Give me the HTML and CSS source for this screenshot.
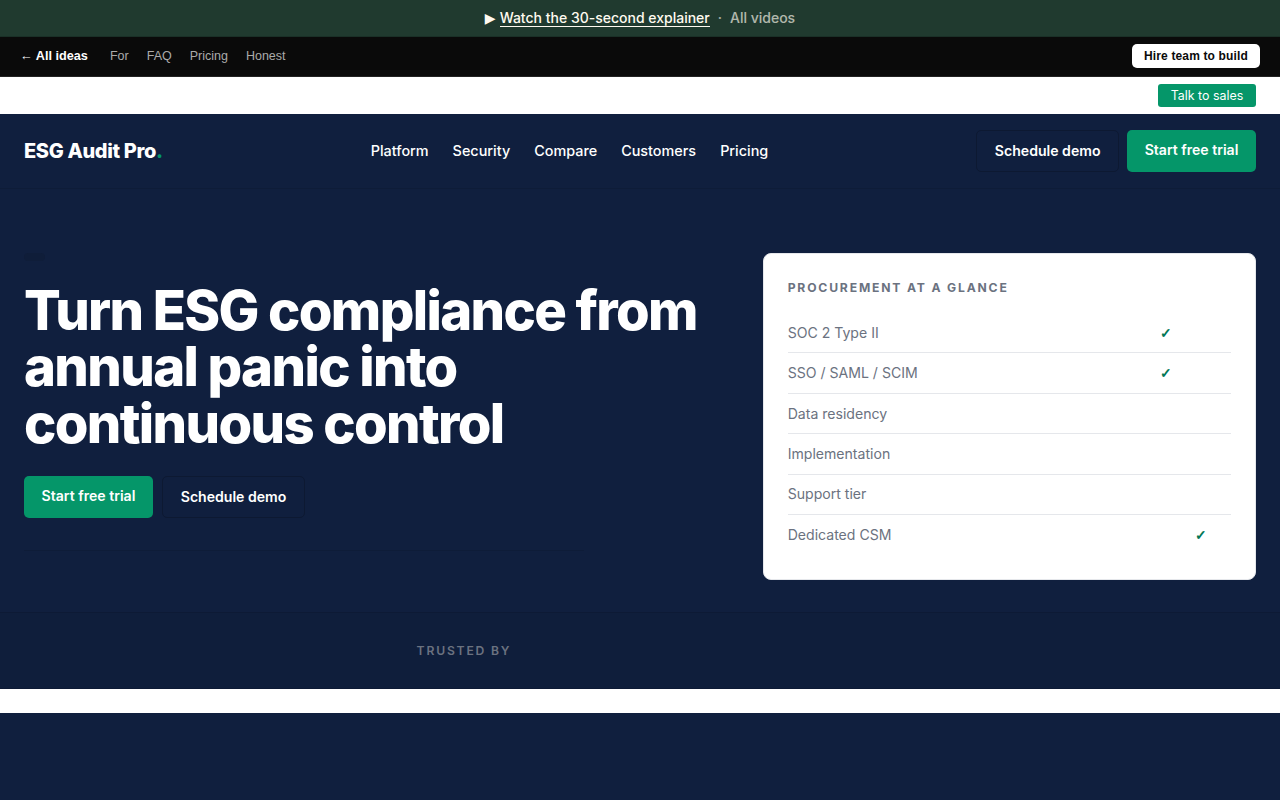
FILE: index.html
```html
<!DOCTYPE html>
<html lang="en">
<head>
    <meta charset="UTF-8">
    <meta name="viewport" content="width=device-width, initial-scale=1.0">
    <title>ESG Audit Pro</title>
    <link rel="stylesheet" href="styles.css">
</head>
<body>
    <div class="video-bar">
        <span class="play">▶</span>
        <a href="#" class="watch">Watch the 30-second explainer</a>
        <span class="dot">·</span>
        <a href="#" class="all-videos">All videos</a>
    </div>

    <nav class="idea-bar">
        <a href="#" class="back">← All ideas</a>
        <a href="#">For</a>
        <a href="#">FAQ</a>
        <a href="#">Pricing</a>
        <a href="#">Honest</a>
        <a href="#" class="hire">Hire team to build</a>
    </nav>

    <div class="sales-bar">
        <a href="#">Talk to sales</a>
    </div>

    <header class="site-header">
        <a href="#" class="logo">ESG Audit Pro<span>.</span></a>
        <nav class="main-nav">
            <a href="#">Platform</a>
            <a href="#">Security</a>
            <a href="#">Compare</a>
            <a href="#">Customers</a>
            <a href="#">Pricing</a>
        </nav>
        <div class="actions">
            <a href="#" class="btn btn-outline">Schedule demo</a>
            <a href="#" class="btn btn-primary">Start free trial</a>
        </div>
    </header>

    <section class="hero">
        <div class="hero-copy">
            <span class="eyebrow"></span>
            <h1>Turn ESG compliance from annual panic into continuous control</h1>
            <div class="actions">
                <a href="#" class="btn btn-primary">Start free trial</a>
                <a href="#" class="btn btn-outline">Schedule demo</a>
            </div>
            <div class="hero-meta"></div>
        </div>
        <aside class="card">
            <h2>Procurement at a glance</h2>
            <ul class="facts">
                <li>SOC 2 Type II <span class="check">✓</span></li>
                <li>SSO / SAML / SCIM <span class="check">✓</span></li>
                <li>Data residency</li>
                <li>Implementation</li>
                <li>Support tier</li>
                <li>Dedicated CSM <span class="check check-end">✓</span></li>
            </ul>
        </aside>
    </section>

    <section class="trusted">
        <span>Trusted by</span>
    </section>

    <section class="next"></section>
</body>
</html>
```

FILE: styles.css
```css
* {
    box-sizing: border-box;
}
body {
    margin: 0;
    height: 800px;
    overflow: hidden;
    background: #fff;
    color: #fff;
    font-family: Inter, sans-serif;
    font-size: 14px;
}
a {
    color: inherit;
    text-decoration: none;
}

/* top bars */
.video-bar {
    display: flex;
    justify-content: center;
    align-items: baseline;
    height: 37px;
    padding-top: 9px;
    background: #203a2f;
    border-bottom: 1px solid #1a3027;
    color: #fffaf0;
    font-weight: 500;
    line-height: 17px;
}
.play {
    margin-right: 4px;
    font-family: "DejaVu Sans", sans-serif;
}
.watch {
    border-bottom: 1px solid #fffaf0;
}
.dot {
    margin: 0 8px;
    opacity: 0.6;
}
.all-videos {
    opacity: 0.65;
}
.idea-bar {
    display: flex;
    align-items: center;
    gap: 18px;
    height: 40px;
    padding: 0 20px 2px;
    background: #0a0a0a;
    border-bottom: 1px solid #222;
    color: #aaa;
    font: 12.5px "Liberation Sans", Arial, sans-serif;
}
.back {
    margin-right: 4px;
    color: #fff;
    font-size: 12.7px;
    font-weight: 700;
}
.hire {
    margin-left: auto;
    padding: 0 12px;
    border-radius: 5px;
    background: #fff;
    color: #0a0a0a;
    font-size: 12px;
    font-weight: 700;
    letter-spacing: 0.15px;
    line-height: 24px;
}
.sales-bar {
    display: flex;
    justify-content: flex-end;
    align-items: center;
    height: 37px;
    padding: 0 24px;
}
.sales-bar a {
    padding: 0 12.8px;
    border-radius: 3px;
    background: #059669;
    font-size: 12.4px;
    line-height: 23px;
}

/* header */
.site-header {
    display: flex;
    justify-content: space-between;
    align-items: center;
    height: 75px;
    padding: 0 24px;
    background: #101f3e;
    border-bottom: 1px solid #0e1c38;
}
.logo {
    font-size: 20px;
    font-weight: 800;
    letter-spacing: -0.35px;
}
.logo span {
    color: #059669;
}
.main-nav {
    display: flex;
    gap: 24px;
    padding-bottom: 2px;
    font-size: 14.4px;
    font-weight: 500;
}
.actions {
    display: flex;
    gap: 8px;
}
.hero .actions {
    gap: 9.2px;
}
.btn {
    height: 42px;
    padding: 0 17.6px;
    border-radius: 5px;
    font-size: 14.08px;
    font-weight: 600;
    line-height: 40px;
}
.btn-primary {
    background: #059669;
}
.btn-outline {
    border: 1px solid #0d1932;
}

/* hero */
.hero {
    display: grid;
    grid-template-columns: 1.4fr 1fr;
    gap: 48px;
    height: 423px;
    padding: 64px 24px 32px;
    background: #101f3e;
}
.eyebrow {
    display: block;
    width: 21px;
    height: 8px;
    border-radius: 4px;
    background: #0f1d39;
}
h1 {
    margin: 20.8px 0 24px;
    font-size: 54.4px;
    font-weight: 800;
    letter-spacing: -1.632px;
    line-height: 56.6px;
}
.hero-meta {
    width: 560px;
    margin-top: 32px;
    border-top: 1px solid #0e1c38;
}
.card {
    height: 327px;
    padding: 24px;
    border: 1px solid #e5e7eb;
    border-radius: 8px;
    background: #fff;
    color: #6b7280;
}
.card h2 {
    margin: 0 0 15.05px;
    font-size: 12.16px;
    font-weight: 700;
    letter-spacing: 1.82px;
    line-height: 20px;
    text-transform: uppercase;
}
.facts {
    margin: 0;
    padding: 0;
    list-style: none;
}
.facts li {
    display: flex;
    justify-content: space-between;
    align-items: center;
    height: 40.4px;
    padding-bottom: 0.8px;
    border-bottom: 1px solid #e5e7eb;
    font-size: 14.08px;
}
.facts li:last-child {
    border-bottom-color: transparent;
}
.check {
    margin-right: 59.4px;
    padding-top: 2px;
    color: #047857;
    font-family: "Liberation Sans", sans-serif;
    font-weight: 700;
    line-height: 17px;
}
.check-end {
    margin-right: 24.4px;
}

/* trusted by strip */
.trusted {
    display: flex;
    align-items: center;
    height: 77px;
    padding-left: 416.6px;
    background: #0f1e3b;
    border-top: 1px solid #0d1a35;
    border-bottom: 1px solid #0d1a35;
    color: #6b7280;
    font-size: 12.16px;
    font-weight: 600;
    letter-spacing: 1.8px;
    text-transform: uppercase;
}
.next {
    height: 87px;
    margin-top: 24px;
    background: #101f3e;
}
```
